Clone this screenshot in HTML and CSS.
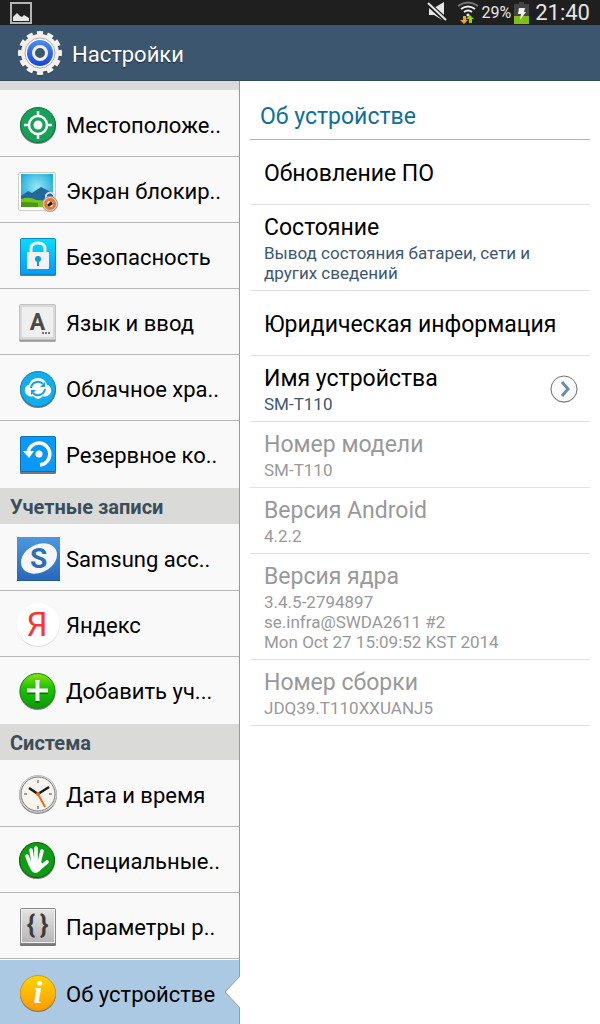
FILE: index.html
```html
<!DOCTYPE html>
<html lang="ru">
<head>
    <meta charset="UTF-8">
    <meta name="viewport" content="width=device-width, initial-scale=1.0">
    <title>Настройки</title>
    <link rel="stylesheet" href="styles.css">
</head>
<body>
    <div class="statusbar">
        <svg class="notice" width="22" height="22" viewBox="0 0 22 22">
            <rect x="1" y="1" width="20" height="20" fill="#222" stroke="#b4b4b4" stroke-width="2"/>
            <path d="M3 19v-4l4-4 3 3 2 1 2-2 5 3v3z" fill="#e8e8e8"/>
        </svg>
        <div class="status-icons">
            <svg width="21" height="22" viewBox="0 0 21 22">
                <path d="M2 6h5l10-6v19L7 13H2z" fill="#e6e6e6"/>
                <path d="M0 1l20 18" stroke="#1f1f1f" stroke-width="5"/>
                <path d="M1 1l18 17" stroke="#e6e6e6" stroke-width="2"/>
            </svg>
            <svg class="wifi" width="22" height="24" viewBox="0 0 22 24">
                <g fill="none" stroke-width="2">
                    <path d="M1 5q10-7 20 0" stroke="#777"/>
                    <path d="M4 8q7-5 14 0M7 11q4-3 8 0" stroke="#eee"/>
                </g>
                <circle cx="11" cy="14" r="1.5" fill="#eee"/>
                <path d="M6 15h3v4h2l-4 4-4-4h3z" fill="#f0a03c"/>
                <path d="M12 22h3v-4h2l-4-4-4 4h3z" fill="#8fd400"/>
            </svg>
            <span class="percent">29%</span>
            <svg width="16" height="22" viewBox="0 0 16 22">
                <path d="M5 0h5v2h5v20H0V2h5z" fill="#444"/>
                <path d="M0 14h15v8H0z" fill="#83bd17"/>
                <path d="M5 6h6l-1 4h2l-6 8 1-6H4z" fill="#f0f0f0"/>
            </svg>
            <span class="clock">21:40</span>
        </div>
    </div>

    <header class="titlebar">
        <svg width="46" height="46" viewBox="0 0 46 46">
            <defs>
                <linearGradient id="gearBlue" x1="0" y1="0" x2="0" y2="1">
                    <stop offset="0" stop-color="#4a8cf5"/>
                    <stop offset="1" stop-color="#1746d8"/>
                </linearGradient>
            </defs>
            <circle cx="23" cy="24" r="20" fill="none" stroke="#2c4052" stroke-width="4" pathLength="24" stroke-dasharray="1.2 .8" stroke-dashoffset=".6"/>
            <circle cx="23" cy="24" r="19" fill="#2c4052"/>
            <circle cx="23" cy="23" r="20" fill="none" stroke="#f3f1ee" stroke-width="4" pathLength="24" stroke-dasharray="1.2 .8" stroke-dashoffset=".6"/>
            <circle cx="23" cy="23" r="19" fill="#f3f1ee"/>
            <circle cx="23" cy="23" r="15" fill="#fff" stroke="#a9a9ab"/>
            <circle cx="23" cy="23" r="13" fill="url(#gearBlue)"/>
            <circle cx="23" cy="23" r="6.5" fill="#3d566c" stroke="#f0efed" stroke-width="3"/>
        </svg>
        <h1>Настройки</h1>
    </header>

    <main class="content">
        <nav class="sidebar">
            <div class="strip"></div>
            <ul class="menu">
                <li><a href="#location">
                    <svg viewBox="0 0 44 44">
                        <circle cx="22" cy="23" r="18" fill="#888"/>
                        <circle cx="22" cy="22" r="17.5" fill="#15a158" stroke="#08733b"/>
                        <g fill="none" stroke="#fff" stroke-width="2.5">
                            <circle cx="22" cy="22" r="9"/>
                            <path d="M22 8v6M22 30v6M8 22h6M30 22h6"/>
                        </g>
                        <circle cx="22" cy="22" r="4.5" fill="#fff"/>
                    </svg>
                    <span>Местоположе..</span>
                </a></li>
                <li><a href="#lock">
                    <svg viewBox="0 0 44 44">
                        <defs>
                            <radialGradient id="sky" cx=".5" cy=".4" r=".7">
                                <stop offset="0" stop-color="#9be8f8"/>
                                <stop offset="1" stop-color="#06a0d2"/>
                            </radialGradient>
                        </defs>
                        <rect x="2.5" y="3.5" width="37" height="38" rx="1.5" fill="#fff" stroke="#ccc"/>
                        <path d="M5 5h32v33H5z" fill="url(#sky)"/>
                        <path d="M5 27l7-5 4 2 9-6 12 6v9H5z" fill="#22699a"/>
                        <path d="M5 30q9-3 15 1l17 1v6H5z" fill="#74c51c"/>
                        <path d="M5 33q9 0 17 1v4H5z" fill="#469a10"/>
                        <path d="M30 30v-4q4-5 8 0v4" fill="none" stroke="#ddd" stroke-width="2"/>
                        <circle cx="34" cy="35" r="7.5" fill="#d5d5d5" stroke="#999"/>
                        <circle cx="34" cy="35" r="4.5" fill="#fff" stroke="#f2742a" stroke-width="3"/>
                        <path d="M31 36l4-4 2 3-4 3z" fill="#222"/>
                    </svg>
                    <span>Экран блокир..</span>
                </a></li>
                <li><a href="#security">
                    <svg viewBox="0 0 44 44">
                        <defs>
                            <linearGradient id="cyan" x1="0" y1="0" x2="0" y2="1">
                                <stop offset="0" stop-color="#06ddff"/>
                                <stop offset="1" stop-color="#0499f8"/>
                            </linearGradient>
                        </defs>
                        <rect x="4" y="4" width="36" height="37" rx="1" fill="#777"/>
                        <rect x="4.5" y="3.5" width="35" height="36" rx="1" fill="url(#cyan)" stroke="#0a8ac6"/>
                        <path d="M15 18v-4q0-6 7-6t7 6v4" fill="none" stroke="#f2f2f2" stroke-width="3"/>
                        <path d="M11 17h22v17H11z" fill="#f2f2f2"/>
                        <circle cx="22" cy="24" r="3" fill="#119ad6"/>
                        <path d="M21 24h2v7h-2z" fill="#119ad6"/>
                    </svg>
                    <span>Безопасность</span>
                </a></li>
                <li><a href="#language">
                    <svg viewBox="0 0 44 44">
                        <rect x="3.5" y="4.5" width="36" height="36" rx="1" fill="#999" stroke="#aaa"/>
                        <rect x="3.5" y="3.5" width="36" height="35" rx="1" fill="#d8d8d8" stroke="#c4c4c4"/>
                        <path d="M6 6h31v30H6z" fill="#efefef"/>
                        <text x="21.5" y="29" class="key-letter">A</text>
                        <path d="M26 31h2v2h-2zM29 31h2v2h-2zM32 31h2v2h-2z" fill="#777"/>
                    </svg>
                    <span>Язык и ввод</span>
                </a></li>
                <li><a href="#cloud">
                    <svg viewBox="0 0 44 44">
                        <circle cx="22" cy="23" r="18" fill="#777"/>
                        <circle cx="22" cy="22" r="17.5" fill="#14adec" stroke="#0b86b5"/>
                        <path d="M13 29a6 6 0 0 1-1-11h1q2-7 9-7t9 7h1a6 6 0 0 1-1 11q-2 1-4 0-5 6-10 0-2 1-4 0z" fill="#fff"/>
                        <path d="M15 21a7 7 0 0 1 12-4M29 22a7 7 0 0 1-12 4" fill="none" stroke="#14a3df" stroke-width="2"/>
                        <path d="M29 15v5h-5zM15 28v-5h5z" fill="#14a3df"/>
                    </svg>
                    <span>Облачное хра..</span>
                </a></li>
                <li><a href="#backup">
                    <svg viewBox="0 0 44 44">
                        <rect x="4" y="4" width="36" height="37" rx="1" fill="#777"/>
                        <rect x="4.5" y="3.5" width="35" height="35" rx="1" fill="#0a99fb" stroke="#0872bd"/>
                        <path d="M12 19a11 11 0 1 1 12 13" fill="none" stroke="#fff" stroke-width="3.5"/>
                        <path d="M7 18h11l-5 7z" fill="#fff"/>
                        <circle cx="23" cy="21" r="3.5" fill="#fff"/>
                    </svg>
                    <span>Резервное ко..</span>
                </a></li>
            </ul>

            <h2>Учетные записи</h2>
            <ul class="menu">
                <li><a href="#samsung">
                    <svg viewBox="0 0 44 44">
                        <defs>
                            <linearGradient id="samsungBlue" x1="0" y1="0" x2="0" y2="1">
                                <stop offset="0" stop-color="#4a98e2"/>
                                <stop offset="1" stop-color="#2868b8"/>
                            </linearGradient>
                        </defs>
                        <path d="M1 0h43v44H1z" fill="#275a94"/>
                        <path d="M1 0h43v43H1z" fill="url(#samsungBlue)"/>
                        <ellipse cx="23" cy="21.5" rx="19" ry="14" transform="rotate(-28 23 21.5)" fill="#f6f6f6"/>
                        <text x="22.5" y="31" class="samsung-letter">S</text>
                    </svg>
                    <span>Samsung acc..</span>
                </a></li>
                <li><a href="#yandex">
                    <svg viewBox="0 0 44 44">
                        <circle cx="22" cy="22.5" r="21.5" fill="#ddd"/>
                        <circle cx="22" cy="21.5" r="21.5" fill="#fff"/>
                        <text x="21" y="33" class="yandex-letter">Я</text>
                    </svg>
                    <span>Яндекс</span>
                </a></li>
                <li><a href="#add">
                    <svg viewBox="0 0 44 44">
                        <defs>
                            <linearGradient id="addGreen" x1="0" y1="0" x2="0" y2="1">
                                <stop offset="0" stop-color="#8be010"/>
                                <stop offset=".4" stop-color="#1fc400"/>
                                <stop offset="1" stop-color="#0a9a08"/>
                            </linearGradient>
                        </defs>
                        <circle cx="21.5" cy="23" r="18" fill="#888"/>
                        <circle cx="21.5" cy="22" r="17.5" fill="url(#addGreen)" stroke="#148a10"/>
                        <path d="M11 23h21M21.5 13v21" stroke="#0b7000" stroke-width="4"/>
                        <path d="M11 21.5h21M21.5 11v21" stroke="#fff" stroke-width="4"/>
                    </svg>
                    <span>Добавить уч...</span>
                </a></li>
            </ul>

            <h2>Система</h2>
            <ul class="menu">
                <li><a href="#date">
                    <svg viewBox="0 0 44 44">
                        <circle cx="22" cy="22" r="19" fill="#888"/>
                        <circle cx="22" cy="21" r="18.5" fill="#ececec" stroke="#bbb"/>
                        <circle cx="22" cy="21" r="17" fill="#f8f5f0" stroke="#777"/>
                        <path d="M22 7v3M22 33v3M8 21h3M33 21h3" stroke="#444"/>
                        <path d="M13 15l9 6 11-7" fill="none" stroke="#1b1b1b" stroke-width="2.5"/>
                        <path d="M22 21l7 13" stroke="#f26a1e" stroke-width="2"/>
                        <circle cx="22" cy="21" r="2" fill="#f26a1e"/>
                    </svg>
                    <span>Дата и время</span>
                </a></li>
                <li><a href="#accessibility">
                    <svg viewBox="0 0 44 44">
                        <circle cx="21" cy="22" r="18" fill="#777"/>
                        <circle cx="21" cy="21" r="17.5" fill="#0e9c14" stroke="#056208"/>
                        <g stroke="#fff" stroke-linecap="round" stroke-width="3.6">
                            <path d="M14 25l-3-8M17 23l-2-12M20 23V9M23 24l3-12M25 28l6-5"/>
                        </g>
                        <path d="M12 22h13l2 5q-3 7-8 7-5-1-7-12z" fill="#fff"/>
                    </svg>
                    <span>Специальные..</span>
                </a></li>
                <li><a href="#developer">
                    <svg viewBox="0 0 44 44">
                        <defs>
                            <linearGradient id="steel" x1="0" y1="0" x2="0" y2="1">
                                <stop offset="0" stop-color="#e4e4e4"/>
                                <stop offset="1" stop-color="#b4b4b4"/>
                            </linearGradient>
                        </defs>
                        <rect x="4" y="4" width="36" height="37" rx="1" fill="#777"/>
                        <rect x="4.5" y="3.5" width="35" height="35" rx="1" fill="url(#steel)" stroke="#888"/>
                        <rect x="5.5" y="4.5" width="33" height="33" fill="none" stroke="#eee"/>
                        <text x="15" y="28" class="brace">{</text>
                        <text x="28" y="28" class="brace">}</text>
                    </svg>
                    <span>Параметры р..</span>
                </a></li>
                <li class="selected"><a href="#about">
                    <svg viewBox="0 0 44 44">
                        <defs>
                            <linearGradient id="amber" x1="0" y1="0" x2="0" y2="1">
                                <stop offset="0" stop-color="#ffd500"/>
                                <stop offset="1" stop-color="#fd9a08"/>
                            </linearGradient>
                        </defs>
                        <circle cx="22" cy="22" r="18" fill="#8a7a5a"/>
                        <circle cx="22" cy="21" r="17.5" fill="url(#amber)" stroke="#d99a10"/>
                        <text x="22" y="31" class="info-letter">i</text>
                    </svg>
                    <span>Об устройстве</span>
                </a>
                <svg class="notch" viewBox="0 0 16 32">
                    <path d="M16 0L1 16l15 16z" fill="#fff"/>
                    <path d="M16 0L1 16l15 16" fill="none" stroke="#999"/>
                </svg></li>
            </ul>
        </nav>

        <section class="details">
            <h2>Об устройстве</h2>
            <ul class="rows">
                <li class="single"><a href="#update"><span class="name">Обновление ПО</span></a></li>
                <li><a href="#status">
                    <span class="name">Состояние</span>
                    <span class="info">Вывод состояния батареи, сети и других сведений</span>
                </a></li>
                <li class="single"><a href="#legal"><span class="name">Юридическая информация</span></a></li>
                <li class="with-button">
                    <a href="#name">
                        <span class="name">Имя устройства</span>
                        <span class="info">SM-T110</span>
                    </a>
                    <button type="button" aria-label="Изменить имя устройства">
                        <svg width="28" height="28" viewBox="0 0 28 28">
                            <circle cx="14" cy="14.5" r="13" fill="#fff" stroke="#bbb"/>
                            <circle cx="14" cy="14" r="13" fill="#fbfbfb" stroke="#777"/>
                            <path d="M12 7l6 7-6 7" fill="none" stroke="#6b8cab" stroke-width="3"/>
                        </svg>
                    </button>
                </li>
                <li class="disabled">
                    <span class="name">Номер модели</span>
                    <span class="info">SM-T110</span>
                </li>
                <li class="disabled">
                    <span class="name">Версия Android</span>
                    <span class="info">4.2.2</span>
                </li>
                <li class="disabled">
                    <span class="name">Версия ядра</span>
                    <span class="info">3.4.5-2794897<br>se.infra@SWDA2611 #2<br>Mon Oct 27 15:09:52 KST 2014</span>
                </li>
                <li class="disabled">
                    <span class="name">Номер сборки</span>
                    <span class="info">JDQ39.T110XXUANJ5</span>
                </li>
            </ul>
        </section>
    </main>
</body>
</html>
```
FILE: styles.css
```css
* {
    box-sizing: border-box;
}

body {
    margin: 0;
    height: 100vh;
    display: flex;
    flex-direction: column;
    font-family: Roboto, "Noto Sans", sans-serif;
    font-size: 22px;
    background-color: white;
    color: black;
}

h1, h2 {
    margin: 0;
    font-weight: normal;
}

ul {
    list-style: none;
    margin: 0;
    padding: 0;
}

a {
    color: inherit;
    text-decoration: none;
}

svg {
    display: block;
    flex-shrink: 0;
}

.statusbar {
    height: 25px;
    flex-shrink: 0;
    padding: 0 10px;
    display: flex;
    justify-content: space-between;
    align-items: center;
    background-color: #1f1f1f;
    color: #e6e6e6;
}

.status-icons {
    display: flex;
    align-items: center;
}

.wifi {
    margin: 0 3px 0 9px;
}

.percent {
    font-size: 16px;
    margin-right: 3px;
}

.clock {
    font-size: 22px;
    margin-left: 5px;
}

.titlebar {
    height: 56px;
    flex-shrink: 0;
    padding-left: 17px;
    display: flex;
    align-items: center;
    gap: 9px;
    background-color: #3b566e;
    border-bottom: 1px solid #33495e;
    color: white;
}

.titlebar h1 {
    padding-top: 3px;
    font-size: 22px;
    text-shadow: 0 1px 1px #1c2a36;
}

.content {
    flex: 1;
    min-height: 0;
    display: flex;
}

.sidebar {
    width: 40%;
    overflow-y: auto;
    scrollbar-width: none;
    background-color: #f9f9f9;
}

.strip, .menu, .sidebar h2 {
    border-right: 1px solid #999;
}

.strip {
    height: 9px;
    background-color: #dadad9;
}

.menu {
    padding: 1px 0;
}

.menu li {
    height: 66px;
    border-bottom: 1px solid #b8b8b8;
    position: relative;
}

.menu li:last-child {
    border-bottom-color: transparent;
}

.menu a {
    height: 100%;
    padding: 3px 0 0 16px;
    display: flex;
    align-items: center;
    gap: 6px;
    white-space: nowrap;
}

.menu a svg {
    width: 44px;
    height: 44px;
}

.menu a span {
    padding-top: 1px;
}

.menu .selected {
    background-color: #abc9e3;
    border-top: 1px solid white;
}

.notch {
    position: absolute;
    right: -1px;
    top: 16px;
    width: 16px;
    height: 32px;
}

.sidebar h2 {
    height: 36px;
    padding: 2px 10px 0;
    font-size: 20px;
    font-weight: bold;
    line-height: 34px;
    background-color: #dadad9;
    color: #3b4d58;
}

.key-letter, .samsung-letter, .info-letter, .brace {
    text-anchor: middle;
    font-weight: bold;
}

.key-letter {
    font-size: 23px;
    fill: #4a4a4a;
}

.samsung-letter {
    font-size: 28px;
    fill: #2a6db8;
}

.yandex-letter {
    text-anchor: middle;
    font-size: 33px;
    fill: #f33;
}

.brace {
    font-size: 26px;
    fill: #3c3c3c;
}

.info-letter {
    font-family: "Liberation Serif", serif;
    font-size: 32px;
    font-style: italic;
    fill: white;
}

.details {
    flex: 1;
    padding: 0 10px;
}

.details h2 {
    height: 59px;
    padding: 13px 10px 0;
    font-size: 23px;
    line-height: 46px;
    border-bottom: 1px solid #a9b4ba;
    color: #0e6f9b;
}

.rows li {
    min-height: 65px;
    padding: 8px 12px 7px 14px;
    display: flex;
    flex-direction: column;
    justify-content: center;
    border-bottom: 1px solid #e0e0e0;
}

.rows .single {
    padding-top: 10px;
}

.rows .with-button {
    flex-direction: row;
    justify-content: space-between;
    align-items: center;
}

.name {
    display: block;
    font-size: 23px;
    line-height: 30px;
}

.info {
    display: block;
    font-size: 17px;
    line-height: 20px;
    color: #3d5770;
}

.disabled .name, .disabled .info {
    color: #999;
}

button {
    padding: 0;
    border: none;
    background: none;
}
```
